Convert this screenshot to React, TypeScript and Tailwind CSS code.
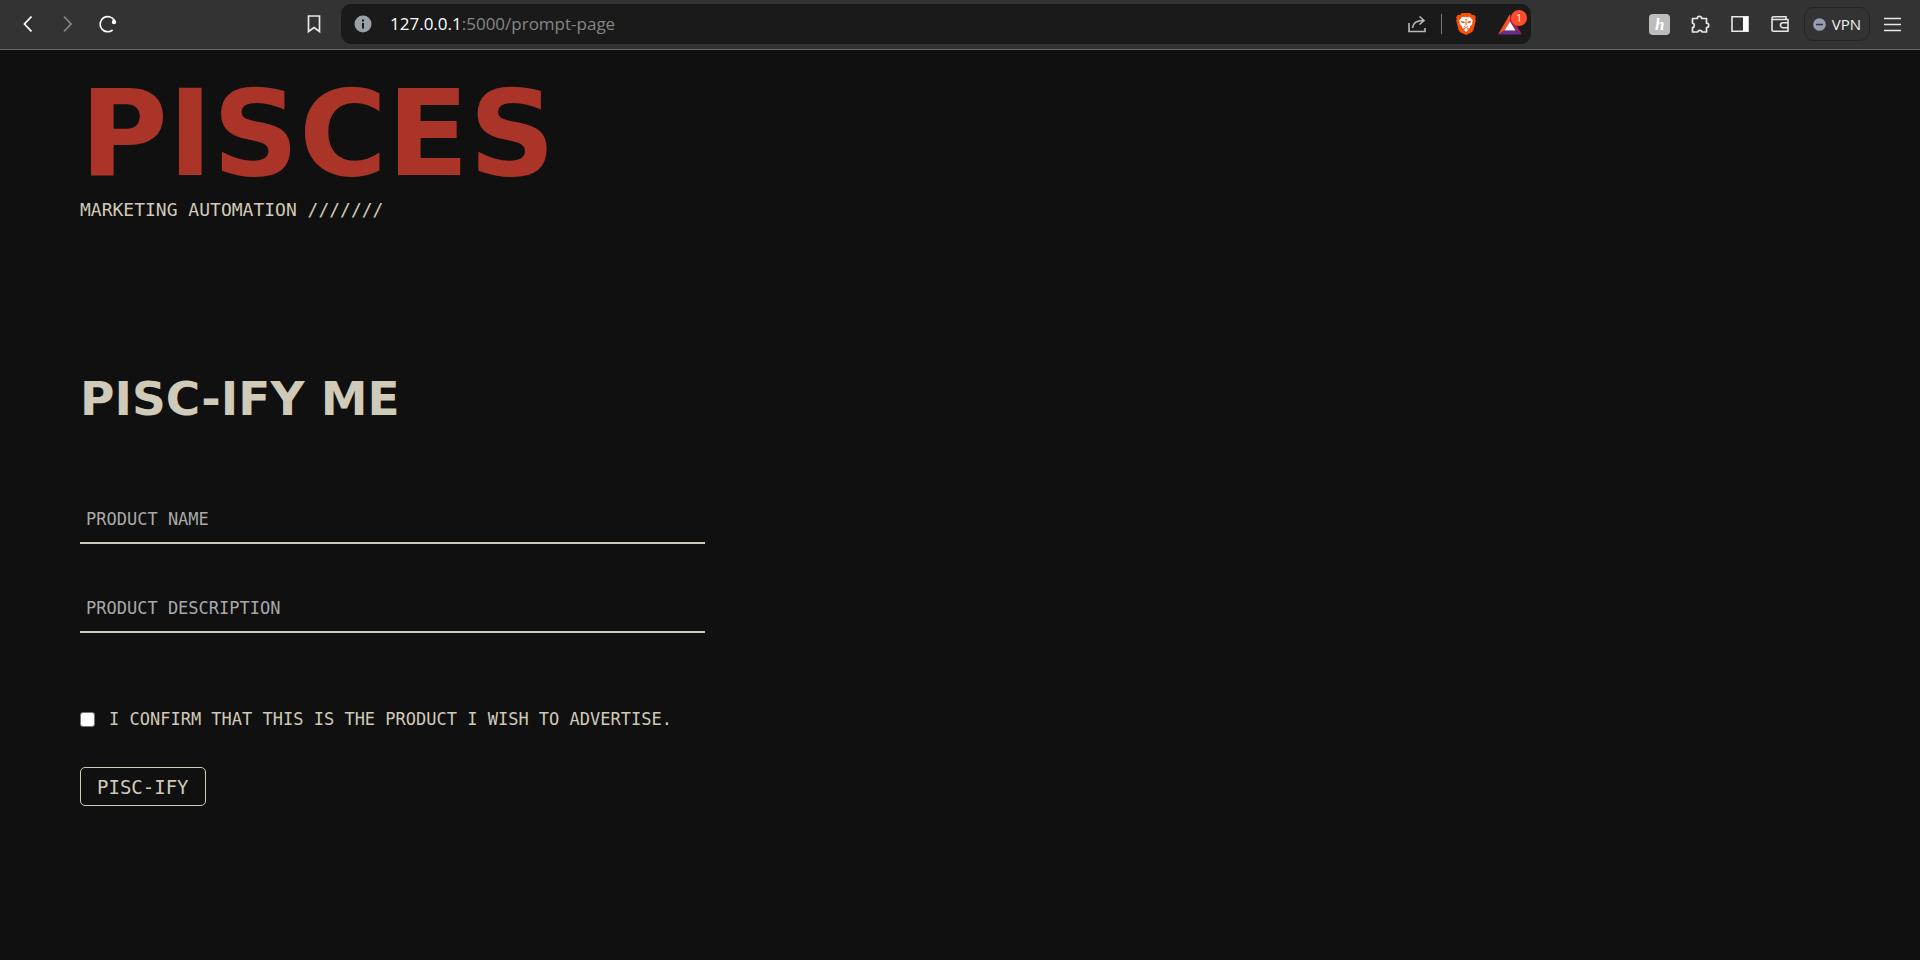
import { useState } from "react";
import type { ReactNode } from "react";

function IconButton({ label, children }: { label: string; children: ReactNode }) {
  return (
    <button type="button" aria-label={label} className="flex size-6 items-center justify-center text-[#e8e8e8]">
      {children}
    </button>
  );
}

function BraveIcon() {
  return (
    <svg viewBox="0 0 20 22" className="h-[22px] w-5">
      <path fill="#fb4f08" d="M5.8 0h8.4l1.8 2 2-.2L19.8 4l-.5 2 .5 1.5-2.3 9.2c-.4 1.2-1.2 2-2.2 2.7L10 22l-5.3-2.6c-1-.7-1.8-1.5-2.2-2.7L.2 7.500.7 6 .2 4 2 1.800 4 2z" />
      <path fill="#fff" d="M6.200 3.800 8.300 4.200 10 3.700l1.700.5 2.100-.4 3.300 3.900-1 1.700.3 1.500-2.500 2.700.3 1.500-1.500.5-1.500-.6-.4 1 1.700.9L10 18.700 7.500 16.900l1.700-.9-.4-1-1.500.6-1.500-.5.300-1.500-2.500-2.700.3-1.500-1-1.700z" />
      <path fill="#fb4f08" d="m4.800 7.800 3.700.9.3 1-.8.500-2.300-.5zM15.200 7.800l-3.700.9-.3 1 .8.500 2.300-.5zM9.400 6h1.200L10.400 9l.3 2.500-.7.500-.7-.5L9.600 9zM7.600 12.800l2.400 1.400 2.400-1.400-.8 1.500L10 15l-1.600-.7z" />
    </svg>
  );
}

function RewardsIcon() {
  return (
    <svg viewBox="0 0 24 21" className="h-[21px] w-6">
      <path fill="#ff4d24" d="M12 0v7.500L6.500 16.500 0 20.500z" />
      <path fill="#9e1f63" d="M12 0v7.500l5.500 9 6.500 4z" />
      <path fill="#662d91" d="m0 20.500 6.500-4h11l6.500 4z" />
      <path fill="#fff" d="m12 7.500 5.500 9h-11z" />
    </svg>
  );
}

function Toolbar() {
  return (
    <header className="flex h-[50px] items-center border-b border-[#666] bg-[#333] px-4 pb-px font-['Open_Sans',sans-serif]">
      <div className="flex items-center gap-4">
        <IconButton label="Back">
          <svg viewBox="0 0 24 24" className="size-6 fill-none stroke-white" strokeWidth="1.800">
            <path d="m15.500 4.500-7 7.500 7 7.500" />
          </svg>
        </IconButton>
        <IconButton label="Forward">
          <svg viewBox="0 0 24 24" className="size-6 fill-none stroke-[#858585]" strokeWidth="1.800">
            <path d="m8 4.500 7 7.500-7 7.500" />
          </svg>
        </IconButton>
        <IconButton label="Reload">
          <svg viewBox="0 0 24 24" className="size-6 fill-none stroke-white" strokeWidth="1.700">
            <path d="M16.600 18A7.600 7.600 0 1 1 18.300 8.300" />
            <circle cx="18" cy="10" r="2.200" fill="#fff" stroke="none" />
          </svg>
        </IconButton>
      </div>

      <div className="ml-[182px] flex flex-1 items-center gap-[15px]">
        <IconButton label="Bookmark this page">
          <svg viewBox="0 0 24 24" className="size-6 fill-none stroke-current" strokeWidth="1.700">
            <path d="M6.500 4h11v15.500L12 15.500l-5.500 4z" />
          </svg>
        </IconButton>
        <div className="flex h-10 max-w-[1190px] flex-1 items-center rounded-[10px] bg-[#1a1a1a] pr-[9px] pl-2.5">
          <button type="button" aria-label="Site information" className="flex size-6 items-center justify-center">
            <svg viewBox="0 0 24 24" className="size-6">
              <circle cx="12" cy="12" r="8.500" fill="#9aa0a6" />
              <path fill="#1a1a1a" d="M11 7.500h2v2h-2zM11 11h2v5.500h-2z" />
            </svg>
          </button>
          <p className="ml-[15px] flex-1 text-[17px] leading-6 text-[#868686]">
            <span className="text-white">127.0.0.1</span>:5000/prompt-page
          </p>
          <div className="flex items-center">
            <IconButton label="Share">
              <svg viewBox="0 0 24 24" className="size-6 fill-none stroke-[#b9b9b9]" strokeWidth="1.600">
                <path d="M4 11v8.500h16V16M7.500 16c.5-5 4-7.500 10.500-7.500M14.500 4.500l4.500 4-4.500 4" />
              </svg>
            </IconButton>
            <span className="mr-3.5 ml-3 h-5 w-px bg-[#777]" />
            <button type="button" aria-label="Brave Shields">
              <BraveIcon />
            </button>
            <button type="button" aria-label="Brave Rewards" className="relative ml-[22px]">
              <RewardsIcon />
              <span className="absolute -top-1 -right-[5px] flex size-4 items-center justify-center rounded-full bg-[#ff4d2a] text-[10px] leading-none text-white">
                1
              </span>
            </button>
          </div>
        </div>
      </div>

      <div className="ml-12 flex items-center gap-4">
        <button type="button" aria-label="Honey" className="flex size-6 items-center justify-center">
          <span className="flex size-[21px] items-center justify-center rounded-[4px] bg-[#bdbdbd] font-['Liberation_Serif',serif] text-[17px] leading-none font-bold text-white italic">
            h
          </span>
        </button>
        <IconButton label="Extensions">
          <svg viewBox="0 0 24 24" className="size-6 fill-none stroke-current" strokeWidth="1.700" strokeLinejoin="round">
            <path d="M4.500 6.500h4.800a2.200 2.200 0 1 1 4.400 0h4.800v4.700a2.200 2.200 0 1 1 0 4.400v4.400h-4.300a2.400 2.400 0 0 0-4.600 0H4.500v-4.300a2.300 2.300 0 0 0 0-4.500z" />
          </svg>
        </IconButton>
        <IconButton label="Sidebar">
          <svg viewBox="0 0 24 24" className="size-6 fill-none stroke-current" strokeWidth="1.600">
            <path d="M4 4.800h16v14.400H4z" />
            <path d="M15 4.800h5v14.400h-5z" fill="#fff" stroke="none" />
          </svg>
        </IconButton>
        <IconButton label="Wallet">
          <svg viewBox="0 0 24 24" className="size-6 fill-none stroke-current" strokeWidth="1.600" strokeLinejoin="round">
            <path d="M18 7.500V4.800H5.500C4.500 4.800 4 5.500 4 6.200v11.800c0 .8.500 1.300 1.300 1.300H20V7.500H5.500C4.500 7.500 4 7 4 6.200M20 10.700h-5a2.500 2.500 0 0 0 0 5h5" />
          </svg>
        </IconButton>
        <button
          type="button"
          className="-mr-1.5 -ml-1 flex h-[34px] items-center gap-1.5 rounded-[10px] border border-[#252525] px-2 text-[15px] text-[#f0f0f0]"
        >
          <svg viewBox="0 0 13 13" className="size-[13px]">
            <circle cx="6.500" cy="6.500" r="6.300" fill="#9a9cb2" />
            <path d="M3 6.500h7" stroke="#333" strokeWidth="1.500" />
          </svg>
          VPN
        </button>
        <IconButton label="Menu">
          <svg viewBox="0 0 24 24" className="size-6 fill-none stroke-current" strokeWidth="1.700">
            <path d="M4 6.500h17M4 12.500h17M4 18.500h17" />
          </svg>
        </IconButton>
      </div>
    </header>
  );
}

function Field({ id, label }: { id: string; label: string }) {
  return (
    <input
      id={id}
      type="text"
      aria-label={label}
      placeholder={label}
      className="w-full border-b-2 border-[#d0cab8] bg-transparent px-1.5 py-[11px] text-[17px] leading-6 text-[#d0cab8] outline-none placeholder:text-[#a9a9a9]"
    />
  );
}

export default function App() {
  const [confirmed, setConfirmed] = useState(false);

  return (
    <div className="min-h-screen bg-[#101010]">
      <Toolbar />
      <main className="px-20 pt-10 pb-20 font-['DejaVu_Sans_Mono',monospace] text-[#d0cab8]">
        <h1 className="font-['DejaVu_Sans',sans-serif] text-[120px] leading-[88px] font-bold text-[#ab3429]">PISCES</h1>
        <p className="mt-5 text-[18px] leading-6">MARKETING AUTOMATION ///////</p>

        <h2 className="mt-[157px] font-['DejaVu_Sans',sans-serif] text-[47px] leading-10 font-bold">PISC-IFY ME</h2>

        <form className="mt-[77px] max-w-[625px]" onSubmit={(event) => event.preventDefault()}>
          <div className="flex flex-col gap-[41px]">
            <Field id="product-name" label="PRODUCT NAME" />
            <Field id="product-description" label="PRODUCT DESCRIPTION" />
          </div>
          <div className="mt-[74px] flex items-center gap-3.5">
            <input
              id="confirm"
              type="checkbox"
              checked={confirmed}
              onChange={(event) => setConfirmed(event.target.checked)}
              className="size-[15px] shrink-0 appearance-none rounded-[3px] border border-[#767676] bg-white checked:bg-[#ab3429]"
            />
            <label htmlFor="confirm" className="text-[17px] leading-6 whitespace-nowrap">
              I CONFIRM THAT THIS IS THE PRODUCT I WISH TO ADVERTISE.
            </label>
          </div>
          <button
            type="submit"
            className="mt-9 flex h-[39px] items-center rounded-[5px] border border-[#d0cab8] px-4 text-[19px] leading-6"
          >
            PISC-IFY
          </button>
        </form>
      </main>
    </div>
  );
}
